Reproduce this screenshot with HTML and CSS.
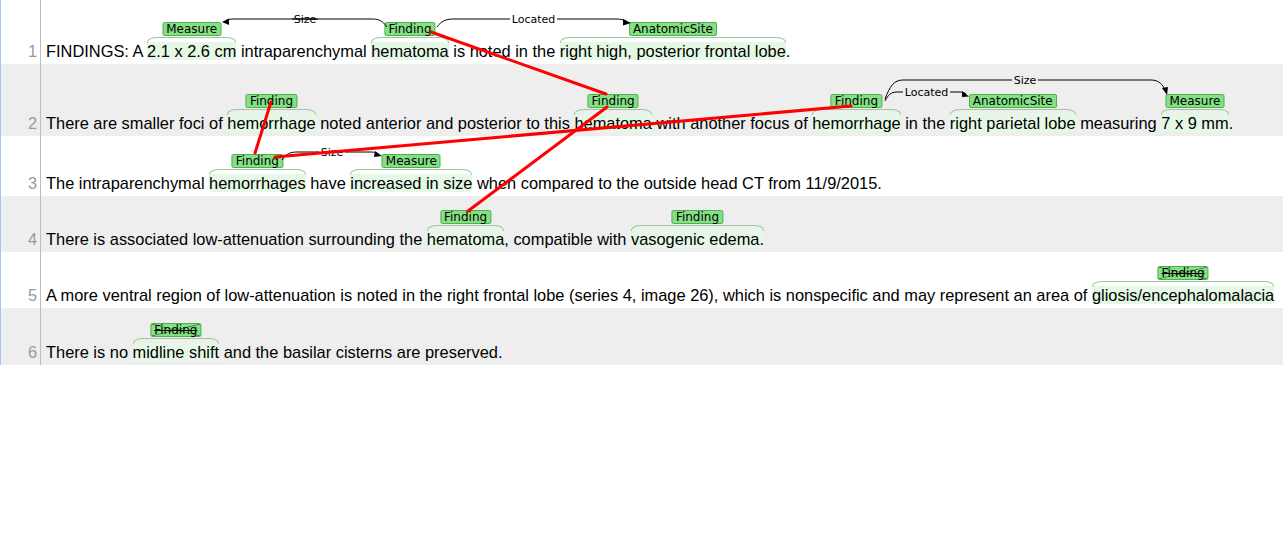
FILE: index.html
```html
<!DOCTYPE html>
<html>
<head>
<meta charset="utf-8">
<link rel="stylesheet" href="styles.css">
</head>
<body>
<div class="doc">
  <div class="row r1">
    <div class="num">1</div>
    <div class="line"><div class="txt">FINDINGS: A <span class="ent">2.1 x 2.6 cm<span class="lab">Measure</span></span> intraparenchymal <span class="ent">hematoma<span class="lab">Finding</span></span> is noted in the <span class="ent">right high, posterior frontal lobe<span class="lab">AnatomicSite</span></span>.</div></div>
  </div>
  <div class="row r2 alt">
    <div class="num">2</div>
    <div class="line"><div class="txt">There are smaller foci of <span class="ent">hemorrhage<span class="lab">Finding</span></span> noted anterior and posterior to this <span class="ent">hematoma<span class="lab">Finding</span></span> with another focus of <span class="ent">hemorrhage<span class="lab">Finding</span></span> in the <span class="ent">right parietal lobe<span class="lab">AnatomicSite</span></span> measuring <span class="ent">7 x 9 mm<span class="lab">Measure</span></span>.</div></div>
  </div>
  <div class="row r3">
    <div class="num">3</div>
    <div class="line"><div class="txt">The intraparenchymal <span class="ent">hemorrhages<span class="lab">Finding</span></span> have <span class="ent">increased in size<span class="lab">Measure</span></span> when compared to the outside head CT from 11/9/2015.</div></div>
  </div>
  <div class="row r4 alt">
    <div class="num">4</div>
    <div class="line"><div class="txt">There is associated low-attenuation surrounding the <span class="ent">hematoma<span class="lab">Finding</span></span>, compatible with <span class="ent">vasogenic edema.<span class="lab">Finding</span></span></div></div>
  </div>
  <div class="row r5">
    <div class="num">5</div>
    <div class="line"><div class="txt">A more ventral region of low-attenuation is noted in the right frontal lobe (series 4, image 26), which is nonspecific and may represent an area of <span class="ent">gliosis/encephalomalacia<span class="lab neg">Finding</span></span></div></div>
  </div>
  <div class="row r6 alt">
    <div class="num">6</div>
    <div class="line"><div class="txt">There is no <span class="ent">midline shift<span class="lab neg">Finding</span></span> and the basilar cisterns are preserved.</div></div>
  </div>

  <svg class="overlay" width="1283" height="370" viewBox="0 0 1283 370">
    <g class="arc">
      <path d="M386,27 C381,20 377,19 370,19 H291 M317,19 H232 C228,19 226,20 224,21"/>
      <polygon points="221,22 228,18.5 228,25"/>
      <text x="304" y="19">Size</text>

      <path d="M436,27 C441,20 446,19 454,19 H509 M556,19 H615 C620,19 623,20 625,21"/>
      <polygon points="630,23 622,19 622,25.5"/>
      <text x="532.5" y="19">Located</text>

      <path d="M884,101 C887,95 890,92 896,92 H902 M949,92 H958 C962,92 964,93 965,94"/>
      <polygon points="968,96.5 961,91 961,97"/>
      <text x="925.5" y="92">Located</text>

      <path d="M884,99 C889,86 893,80 902,80 H1011 M1037,80 H1150 C1158,80 1162,85 1164,90"/>
      <polygon points="1166,95 1161,88 1167,87"/>
      <text x="1024" y="80">Size</text>

      <path d="M281,160 C285,154 289,152 296,152 H318 M344,152 H370 C374,152 376,153 377,154"/>
      <polygon points="381,156 374,151 373,157"/>
      <text x="331" y="152">Size</text>
    </g>
    <g class="rel">
      <line x1="430" y1="32" x2="605" y2="94"/>
      <line x1="270" y1="102" x2="254" y2="153"/>
      <line x1="606" y1="107" x2="467" y2="211"/>
      <line x1="850" y1="106" x2="274" y2="157"/>
    </g>
  </svg>
</div>
</body>
</html>
```
FILE: styles.css
```css
* { box-sizing: border-box; }
html, body { margin: 0; background: #fff; overflow: hidden; }

.doc {
  position: relative;
  width: 1283px;
  border-left: 1px solid #a6c2ef;
  font-family: "Liberation Sans", Arial, sans-serif;
  font-size: 16.4px;
  color: #000;
  overflow: hidden;
}

.row { display: flex; height: 56px; }
.row.alt { background: #eeeeee; }
.r1 { height: 64px; }
.r2 { height: 72px; }
.r3 { height: 60px; }
.r4 { height: 56px; }
.r5 { height: 56px; }
.r6 { height: 57px; }

.num {
  flex: 0 0 40px;
  border-right: 1px solid #bdbdbd;
  color: #9a9a9a;
  display: flex;
  align-items: flex-end;
  justify-content: flex-end;
  padding: 0 3px 4px 0;
  line-height: 18px;
}

.line {
  flex: 1;
  display: flex;
  align-items: flex-end;
  padding: 0 0 4px 5px;
  min-width: 0;
}

.txt { white-space: nowrap; line-height: 18px; }

.ent {
  position: relative;
  display: inline-block;
  background: #e5f8e5;
  border-radius: 3px;
}
.ent::before, .ent::after {
  content: "";
  position: absolute;
  top: -5px;
  height: 5px;
  width: 50%;
  border-top: 1px solid #97cc97;
}
.ent::before { left: 0; border-left: 1px solid #97cc97; border-top-left-radius: 10px 5px; }
.ent::after { right: 0; border-right: 1px solid #97cc97; border-top-right-radius: 10px 5px; }

.lab {
  position: absolute;
  left: 50%;
  bottom: calc(100% + 6px);
  transform: translateX(-50%);
  font: 12px/12px "DejaVu Sans", sans-serif;
  color: #000;
  background: #85e085;
  border: 1px solid #4fae4f;
  border-radius: 2px;
  padding: 0 3px;
  white-space: nowrap;
  z-index: 1;
}
.lab.neg {
  text-decoration: line-through;
  background:
    linear-gradient(to top right, transparent calc(50% - 0.7px), #3d6b3d 50%, transparent calc(50% + 0.7px)),
    linear-gradient(to bottom right, transparent calc(50% - 0.7px), #3d6b3d 50%, transparent calc(50% + 0.7px)),
    #85e085;
}

.overlay {
  position: absolute;
  top: 0;
  left: 0;
  pointer-events: none;
  z-index: 2;
}
.arc path { fill: none; stroke: #000; stroke-width: 1; }
.arc polygon { fill: #000; }
.arc text {
  font-family: "DejaVu Sans", sans-serif;
  font-size: 11px;
  text-anchor: middle;
  dominant-baseline: central;
  fill: #000;
}
.rel line { stroke: #ff0000; stroke-width: 3; stroke-linecap: round; }
```
